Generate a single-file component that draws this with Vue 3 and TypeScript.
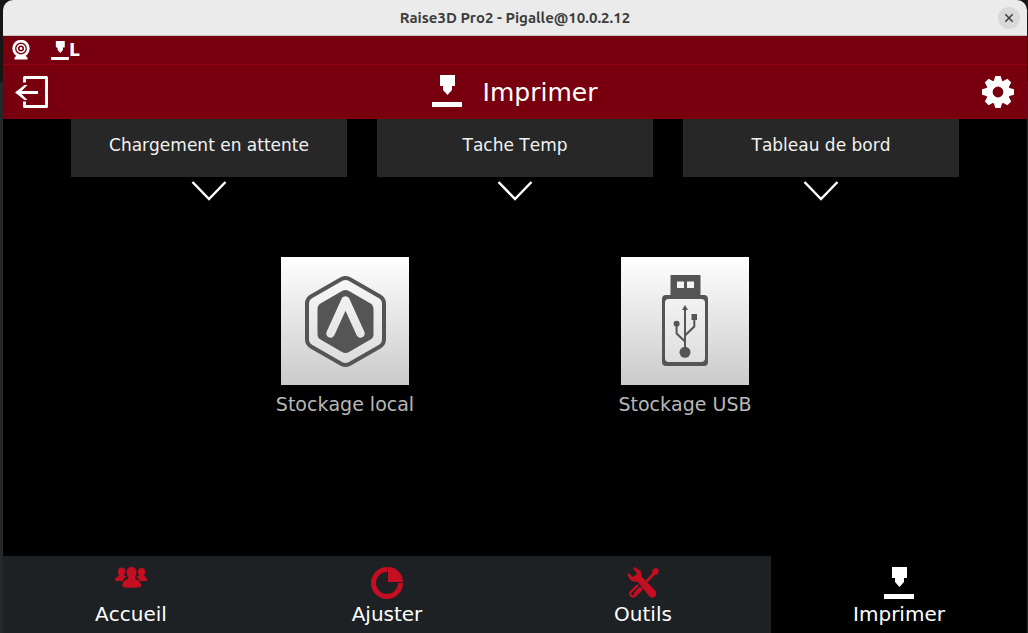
<script setup lang="ts">
import { ref } from 'vue'

interface NavItem {
  id: string
  label: string
}

const shortcuts: string[] = ['Chargement en attente', 'Tache Temp', 'Tableau de bord']

const navItems: NavItem[] = [
  { id: 'home', label: 'Accueil' },
  { id: 'tune', label: 'Ajuster' },
  { id: 'tools', label: 'Outils' },
  { id: 'print', label: 'Imprimer' },
]

const active = ref<string>('print')
const teeth: number[] = [0, 45, 90, 135, 180, 225, 270, 315]
</script>

<template>
  <div class="desktop">
    <div class="window">
      <header class="titlebar">
        <h1 class="window-title">Raise3D Pro2 - Pigalle@10.0.2.12</h1>
        <button class="close" type="button" aria-label="Fermer">
          <svg width="10" height="10" viewBox="0 0 10 10" fill="none" stroke="#3d3d3d" stroke-width="1.5">
            <path d="M1.300 1.300l7.400 7.400M8.700 1.300L1.300 8.700" />
          </svg>
        </button>
      </header>

      <div class="status">
        <svg width="18" height="20" viewBox="0 0 18 20" fill="none" stroke="#fff">
          <circle cx="9" cy="8.500" r="7.300" stroke-width="2.800" />
          <circle cx="9" cy="8.500" r="3.800" stroke-width="1.600" />
          <circle cx="9" cy="8.500" r="1.400" fill="#fff" stroke="none" />
          <path d="M4.500 15.500h9l2 2.200V19.500H2.500v-1.800z" fill="#fff" stroke="none" />
        </svg>
        <span class="extruder">
          <svg width="18" height="19" viewBox="0 0 30 32" fill="#fff">
            <path d="M8 0h15v11h-3v4l-4.500 5-4.500-5v-4H8zM0 27h30v5H0z" />
          </svg>
          <span>L</span>
        </span>
      </div>

      <div class="header">
        <button class="icon-button" type="button" aria-label="Quitter">
          <svg width="34" height="32" viewBox="0 0 34 32">
            <path d="M9.500 6.500v-5H31.500v29H9.500v-5" fill="none" stroke="#fff" stroke-width="3" stroke-linejoin="round" />
            <path d="M0 16.400L9.500 9h3L6.500 14.900H23v3H6.500L12.500 24h-3z" fill="#fff" />
          </svg>
        </button>
        <h2 class="page-title">
          <svg width="30" height="32" viewBox="0 0 30 32" fill="#fff">
            <path d="M8 0h15v11h-3v4l-4.500 5-4.500-5v-4H8zM0 27h30v5H0z" />
          </svg>
          <span>Imprimer</span>
        </h2>
        <button class="icon-button" type="button" aria-label="Paramètres">
          <svg width="32" height="32" viewBox="-16 -16 32 32">
            <circle r="8.700" fill="none" stroke="#fff" stroke-width="6.600" />
            <path v-for="a in teeth" :key="a" :transform="`rotate(${a})`" d="M-4.300-10.500L-2.700-16H2.700L4.300-10.500z" fill="#fff" />
          </svg>
        </button>
      </div>

      <main class="content">
        <div class="shortcuts">
          <button v-for="name in shortcuts" :key="name" class="shortcut" type="button">
            <span class="shortcut-label">{{ name }}</span>
            <svg width="36" height="22" viewBox="0 0 36 22" fill="none" stroke="#fff" stroke-width="2.500">
              <path d="M1.500 2L18 19L34.500 2" />
            </svg>
          </button>
        </div>

        <div class="storages">
          <button class="storage" type="button">
            <svg class="tile" width="128" height="128" viewBox="0 0 128 128">
              <defs>
                <mask id="mark">
                  <rect width="128" height="128" fill="#fff" />
                  <path d="M49.500 76.500L64.500 43.500L79.500 76.500" fill="none" stroke="#000" stroke-width="8.500" stroke-linecap="round" stroke-linejoin="round" />
                </mask>
              </defs>
              <path
                d="M60.500 22Q64.500 20 68.500 22L99 39.500Q103 42 103 46.500V82.500Q103 87 99 89.500L68.500 107Q64.500 109 60.500 107L30 89.500Q26 87 26 82.500V46.500Q26 42 30 39.500z"
                fill="#fff" fill-opacity=".2" stroke="#555" stroke-width="4"
              />
              <path
                mask="url(#mark)"
                d="M61 34Q64.500 32 68 34L89.500 46.500Q92.500 48.500 92.500 52V77Q92.500 80.500 89.500 82.500L68 95Q64.500 97 61 95L39.500 82.500Q36.500 80.500 36.500 77V52Q36.500 48.500 39.500 46.500z"
                fill="#555"
              />
            </svg>
            <span>Stockage local</span>
          </button>

          <button class="storage" type="button">
            <svg class="tile" width="128" height="128" viewBox="0 0 128 128" fill="#555">
              <path fill-rule="evenodd" d="M49.500 18h30v21h-30zM56 24.500v6.500h7v-6.500zM66 24.500v6.500h7v-6.500z" />
              <path
                fill-rule="evenodd"
                d="M45 38H83Q87 38 87 42V105Q87 109 83 109H45Q41 109 41 105V42Q41 38 45 38zM48 42Q44 42 44 46V101Q44 105 48 105H80Q84 105 84 101V46Q84 42 80 42z"
              />
              <rect x="44" y="42" width="40" height="63" rx="4" fill="#fff" fill-opacity=".25" />
              <path d="M64 95V51M55.600 67V76.500L64 84.500M73.300 61V69.500L64 78.500" fill="none" stroke="#555" stroke-width="2" />
              <circle cx="64" cy="95.300" r="5.500" />
              <circle cx="55.600" cy="66.700" r="3" />
              <path d="M70.500 57H76v6h-5.500zM64 48l3 5h-6z" />
            </svg>
            <span>Stockage USB</span>
          </button>
        </div>
      </main>

      <nav class="nav">
        <button
          v-for="item in navItems"
          :key="item.id"
          type="button"
          class="nav-item"
          :class="{ active: active === item.id }"
          @click="active = item.id"
        >
          <svg v-if="item.id === 'home'" width="32" height="32" viewBox="0 0 32 32" fill="currentColor">
            <path d="M6.500 .5C9 .5 10.600 2.200 10.400 4.600C10.300 6 9.900 7 9.200 7.700C9.200 8.800 10.600 9 11.800 9.600C10.500 10.500 9 11 8.300 12.500L7.800 14H.6C0 14 0 13 .2 12C.7 9.800 3.800 9.600 4.300 8.200C3.300 7.300 2.900 6 2.900 4.500C2.900 2.200 4.300 .5 6.500 .5z" />
            <path d="M26.500 1C29 1 30.500 2.700 30.300 4.800C30.200 6.200 29.800 7.200 29.100 8C29.100 9.600 31.400 9.700 31.900 12C32.100 13.200 31.900 14 31.400 14H24.800L24.200 12.500C23.500 11 22 10.500 20.800 9.600C22 9 23.900 9 24.100 8C23.200 7.200 22.800 6.200 22.800 4.800C22.800 2.600 24.300 1 26.500 1z" />
            <path d="M16.600 0C19.800 0 21.700 2.200 21.500 5.400C21.400 7.500 20.900 9 19.900 10.200C19.900 13.200 24.800 12 26 17.500C26.300 19.500 25.700 20 24 20.200Q16.500 21.500 9.200 20.200C7.600 20 7 19.500 7.300 17.500C8.500 12 13.400 13.200 13.400 10.200C12.300 9 11.800 7.500 11.700 5.400C11.500 2.200 13.400 0 16.600 0z" />
          </svg>
          <svg v-else-if="item.id === 'tune'" width="32" height="32" viewBox="0 0 32 32">
            <path d="M16 2.500A13.500 13.500 0 1 0 29.500 16" fill="none" stroke="currentColor" stroke-width="5" />
            <path d="M17 0A15 15 0 0 1 32 15H17z" fill="currentColor" />
          </svg>
          <svg v-else-if="item.id === 'tools'" width="32" height="32" viewBox="0 0 32 32" fill="currentColor">
            <path d="M7.500 0L13 3.500Q15 5 14.500 9.500L28 23.500Q30.500 26.500 28.300 29.500Q25.500 32 22.500 29.500L10.500 14.500Q5.500 15.500 3 12.500L0 7L1.500 6L5.500 10L9.500 7.500V5.500L6 1.500z" />
            <path d="M25.500 2.500L29.500 .8L32 3.500L30.500 7.500L27.500 8L20.500 15.500L18.500 13.500L25 6.500z" />
            <path fill-rule="evenodd" d="M10.500 17L3.500 23.500Q.8 26.500 3.200 29.500Q6.500 32 9.500 29L16 22.500L14.300 20.500L7.500 27.500Q5.500 29 4.500 27.500Q4 26.500 5 25.500L12 18.800z" />
            <path d="M13 19.500l1.500 1.500-6.500 6.500-1.500-1.500z" />
          </svg>
          <svg v-else width="32" height="32" viewBox="0 0 32 32" fill="currentColor">
            <path d="M9 0h15v11h-3v4l-4.500 5-4.500-5v-4H9zM1 27h30v5H1z" />
          </svg>
          <span>{{ item.label }}</span>
        </button>
      </nav>
    </div>
  </div>
</template>

<style>
body {
  margin: 0;
  background: #1d2124;
}
</style>

<style scoped>
.desktop {
  min-height: 100vh;
  box-sizing: border-box;
  padding: 0 1px 0 3px;
  display: flex;
  background: linear-gradient(#161616 82px, #23282b 82px);
}

.window {
  flex: 1;
  display: flex;
  flex-direction: column;
  overflow: hidden;
  border-radius: 10px 10px 0 0;
  background: #000;
  color: #fff;
  font-family: "DejaVu Sans", sans-serif;
  font-kerning: none;
}

button {
  margin: 0;
  padding: 0;
  border: 0;
  background: none;
  color: inherit;
  font: inherit;
  font-kerning: inherit;
  cursor: pointer;
}

svg {
  display: block;
  flex: none;
}

.titlebar {
  display: grid;
  grid-template-columns: 1fr auto 1fr;
  align-items: center;
  height: 36px;
  box-sizing: border-box;
  padding: 0 7px;
  border-bottom: 1px solid #c9c5c5;
  background: #ebebeb;
}

.window-title {
  grid-column: 2;
  margin: 0;
  color: #3d3d3d;
  font: bold 15px/20px Ubuntu, "Noto Sans", sans-serif;
}

.close {
  justify-self: end;
  display: grid;
  place-items: center;
  width: 22px;
  height: 22px;
  border-radius: 50%;
  background: #d9d9d9;
}

.status {
  display: flex;
  align-items: center;
  gap: 21px;
  height: 28px;
  padding: 0 9px;
  border-bottom: 1px solid #960010;
  background: #78000e;
}

.extruder {
  display: flex;
  align-items: center;
  font-size: 17px;
  line-height: 20px;
  font-weight: bold;
}

.header {
  display: grid;
  grid-template-columns: 1fr auto 1fr;
  align-items: center;
  height: 54px;
  padding: 0 13px 0 12px;
  background: #78000e;
}

.icon-button:last-child {
  justify-self: end;
}

.icon-button:first-child {
  justify-self: start;
}

.page-title {
  display: flex;
  align-items: flex-start;
  gap: 21px;
  margin: 0;
  padding-top: 2px;
  font-size: 25px;
  line-height: 36px;
  font-weight: normal;
}

.content {
  flex: 1;
}

.shortcuts {
  display: grid;
  grid-template-columns: repeat(3, 1fr);
  gap: 30px;
  padding: 0 68px;
}

.shortcut {
  display: flex;
  flex-direction: column;
  align-items: center;
  gap: 3px;
}

.shortcut-label {
  align-self: stretch;
  padding: 16px 0 22px;
  background: #272727;
  color: #f2f2f2;
  font-size: 17px;
  line-height: 20px;
}

.storages {
  display: flex;
  justify-content: center;
  gap: 180px;
  padding: 55px 0 40px;
}

.storage {
  display: flex;
  flex-direction: column;
  align-items: center;
  gap: 7px;
  width: 160px;
  color: #b8b8b8;
  font-size: 19px;
  line-height: 24px;
}

.tile {
  background: linear-gradient(#fff, #cbcbcb);
}

.nav {
  display: grid;
  grid-template-columns: repeat(4, 1fr);
  background: #1d2124;
}

.nav-item {
  display: flex;
  flex-direction: column;
  align-items: center;
  gap: 3px;
  padding: 11px 0 7px;
  font-size: 20px;
  line-height: 24px;
}

.nav-item svg {
  color: #c50e22;
}

.nav-item.active {
  background: #000;
}

.nav-item.active svg {
  color: #fff;
}
</style>
